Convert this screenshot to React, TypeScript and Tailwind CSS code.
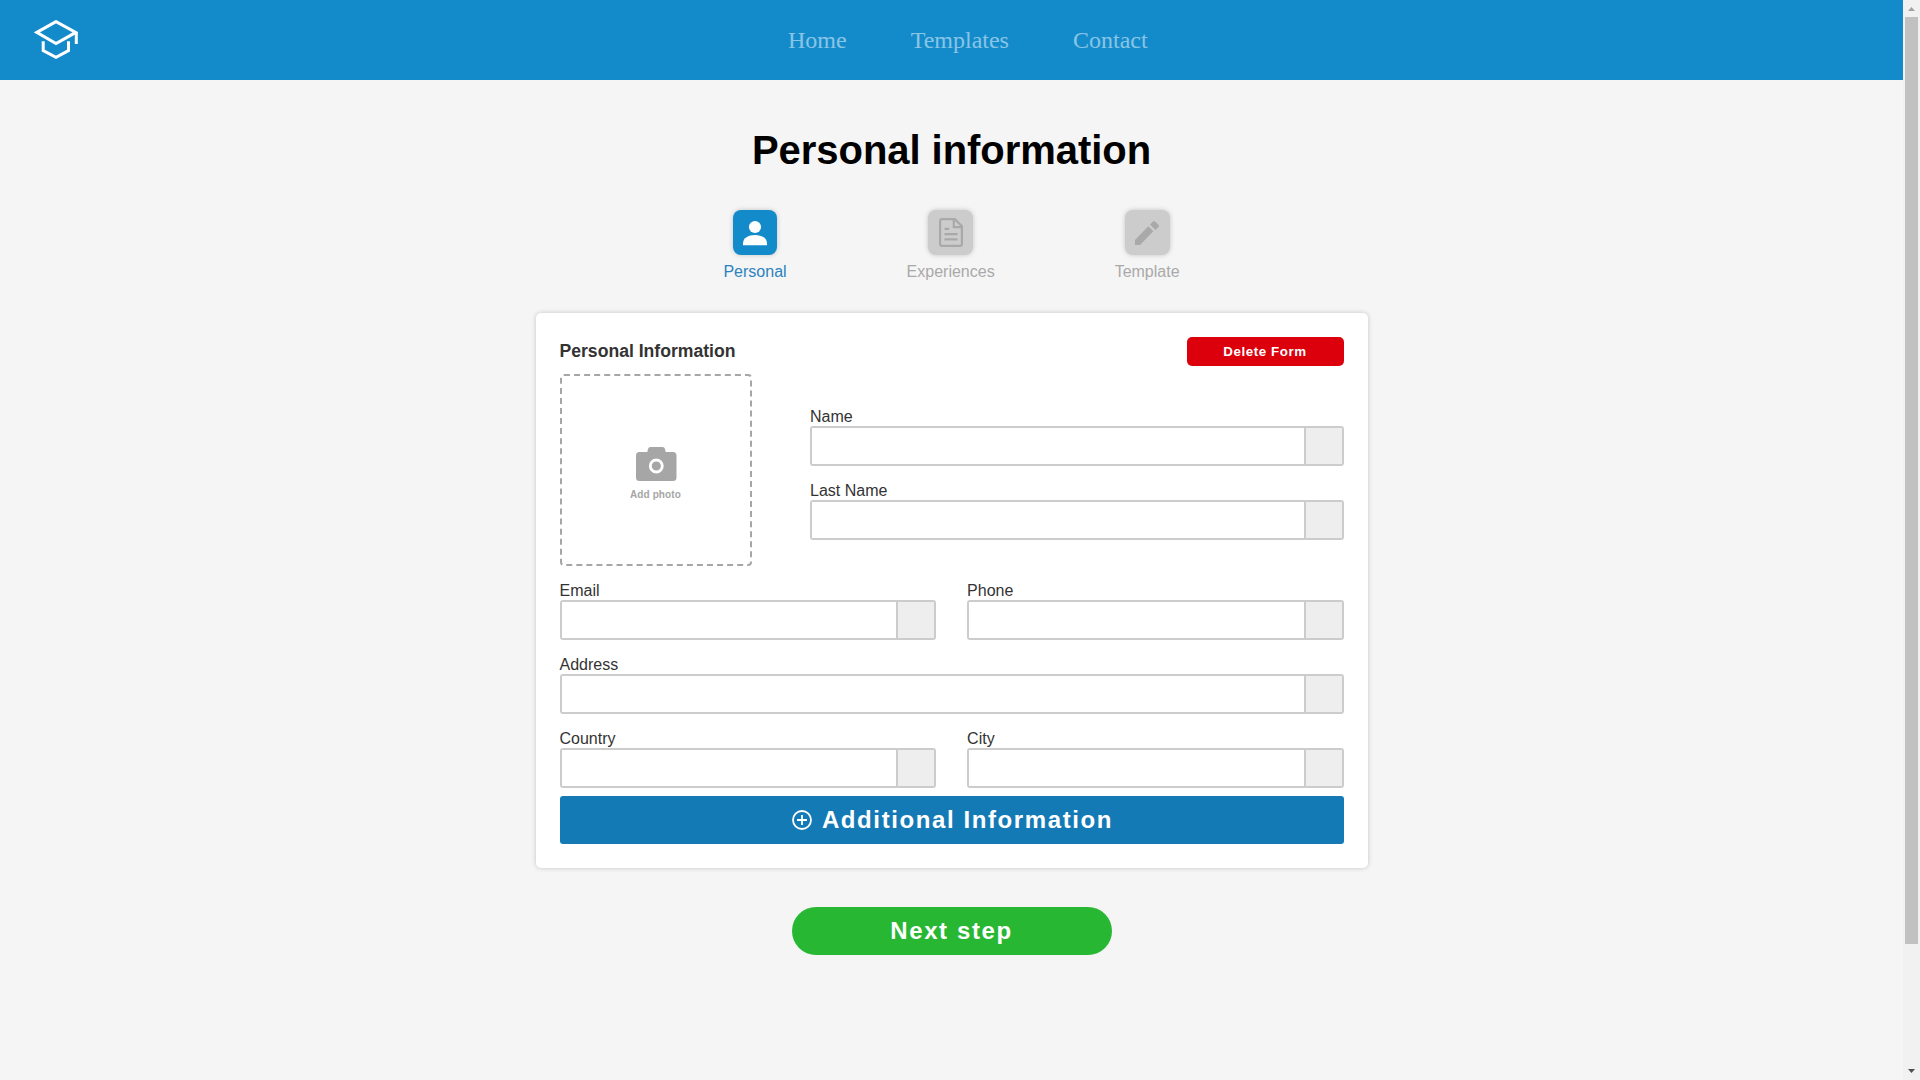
import React from "react";

function Logo() {
  return (
    <svg width="44" height="40" viewBox="0 0 44 40" fill="none" stroke="#ffffff" strokeWidth="3">
      <path d="M2.8 12.4 22 1.6 41.8 12.4 22 23.6Z" />
      <path d="M42.3 12.4V24" />
      <path d="M9.2 21.3V30.5L22 37.4 34.5 30.5V21.3" />
    </svg>
  );
}

function PersonIcon() {
  return (
    <svg width="24" height="26" viewBox="0 0 24 26" fill="#ffffff">
      <circle cx="12" cy="7" r="6.1" />
      <path d="M0 23.4C0 17.8 5.4 14.9 12 14.9S24 17.8 24 23.4V25.2H0Z" />
    </svg>
  );
}

function DocumentIcon() {
  return (
    <svg width="24" height="29" viewBox="0 0 24 29" fill="none" stroke="#a9a9a9" strokeWidth="2.2">
      <path d="M3 1.1H15.8L22.9 8.2V26Q22.9 27.9 21 27.9H3Q1.1 27.9 1.1 26V3Q1.1 1.1 3 1.1Z" />
      <path d="M14.8 1.1V9.2H22.9" />
      <path d="M5.5 10.8H10.2M5.5 16.2H18.5M5.5 21.4H18.5" />
    </svg>
  );
}

function PencilIcon() {
  return (
    <svg width="26" height="26" viewBox="0 0 26 26" fill="#a9a9a9">
      <path d="M14.3 6.2 19.4 11.3 6 25H1V20Z" />
      <path d="M16 4.5 19 1.4Q20 .6 21 1.4L24.6 5Q25.4 6 24.6 7L21.4 10Z" />
    </svg>
  );
}

function CameraIcon() {
  return (
    <svg className="relative left-[1px]" width="41" height="34" viewBox="0 0 41 34">
      <path
        fill="#a6a6a6"
        d="M3.5 5H11.3L12 2Q12.5 0 14.5 0H26.5Q28.5 0 29 2L29.7 5H37Q40.5 5 40.5 8.5V30.5Q40.5 34 37 34H3.5Q0 34 0 30.5V8.5Q0 5 3.5 5Z"
      />
      <circle cx="20.3" cy="19" r="6" fill="#a6a6a6" stroke="#ffffff" strokeWidth="2.8" />
    </svg>
  );
}

function PlusCircleIcon() {
  return (
    <svg width="20" height="20" viewBox="0 0 20 20" fill="none" stroke="#ffffff" strokeWidth="1.8">
      <circle cx="10" cy="10" r="9" />
      <path d="M10 5V15M5 10H15" />
    </svg>
  );
}

function Step({
  label,
  active,
  children,
}: {
  label: string;
  active?: boolean;
  children: React.ReactNode;
}) {
  return (
    <div className={`flex flex-col items-center ${active ? "text-[#2b83bf]" : "text-[#a9a9a9]"}`}>
      <div
        className={`flex h-[45px] items-center justify-center rounded-lg shadow-[0_0_5px_rgba(0,0,0,0.2)] ${
          active ? "w-11 bg-[#138bcb]" : "w-[45px] bg-[#cccccc]"
        }`}
      >
        {children}
      </div>
      <span className="mt-2 text-base leading-[18px]">{label}</span>
    </div>
  );
}

function Field({ label }: { label: string }) {
  return (
    <label className="flex flex-1 flex-col text-base leading-[18px] text-[#333333]">
      {label}
      <span className="flex h-10 overflow-hidden rounded-[3px] border-2 border-[#cccccc]">
        <input className="min-w-0 flex-1 bg-white px-2 outline-none" />
        <span className="w-[38px] border-l-2 border-[#cccccc] bg-[#eeeeee]" />
      </span>
    </label>
  );
}

function Scrollbar() {
  return (
    <div className="flex w-[17px] flex-col items-center bg-[#f1f1f1]">
      <svg className="h-[17px] w-[17px] shrink-0" viewBox="0 0 17 17" fill="#a3a3a3">
        <path d="M5 11 8.5 7 12 11Z" />
      </svg>
      <div className="h-[927px] w-[13px] bg-[#c1c1c1]" />
      <svg className="mt-auto h-[17px] w-[17px] shrink-0" viewBox="0 0 17 17" fill="#505050">
        <path d="M5 6 8.5 10 12 6Z" />
      </svg>
    </div>
  );
}

export default function App() {
  return (
    <div className="flex h-[1080px] w-[1920px] overflow-hidden bg-[#f5f5f5] font-['Liberation_Sans',Arial,sans-serif]">
      <div className="flex w-[1903px] flex-col">
        <header className="flex h-20 items-center bg-[#138bcb] pl-[34px]">
          <Logo />
          <nav className="ml-[710px] flex gap-16 font-['Liberation_Serif','Times_New_Roman',serif] text-2xl text-white/50">
            <a>Home</a>
            <a>Templates</a>
            <a>Contact</a>
          </nav>
        </header>

        <main className="flex flex-col items-center">
          <h1 className="mt-[47px] text-[40px] leading-[46px] font-bold tracking-[-0.05px] text-black">
            Personal information
          </h1>

          <div className="mt-[37px] flex gap-[120px]">
            <Step label="Personal" active>
              <PersonIcon />
            </Step>
            <Step label="Experiences">
              <DocumentIcon />
            </Step>
            <Step label="Template">
              <PencilIcon />
            </Step>
          </div>

          <section className="mt-8 flex w-[832px] flex-col rounded-[5px] bg-white p-6 shadow-[0_0_5px_rgba(0,0,0,0.2)]">
            <div className="flex h-[37px] items-start justify-between">
              <h2 className="mt-1 text-[17.6px] leading-5 font-bold text-[#333333]">Personal Information</h2>
              <button className="h-[29px] w-[157px] rounded-[5px] bg-[#db000b] pt-px text-[13.33px] font-bold tracking-[0.6px] text-white">
                Delete Form
              </button>
            </div>
            <div className="flex gap-[58.5px]">
              <div className="flex h-48 w-48 flex-col items-center rounded-[4px] border-2 border-dashed border-[#a6a6a6] pt-[71px]">
                <CameraIcon />
                <span className="mt-2 text-[10px] leading-3 font-bold tracking-[0.1px] text-[#a6a6a6]">Add photo</span>
              </div>
              <div className="flex flex-1 flex-col gap-4 pt-[34px]">
                <div className="flex">
                  <Field label="Name" />
                </div>
                <div className="flex">
                  <Field label="Last Name" />
                </div>
              </div>
            </div>
            <div className="mt-4 flex flex-col gap-4">
              <div className="flex gap-[31.2px]">
                <Field label="Email" />
                <Field label="Phone" />
              </div>
              <div className="flex">
                <Field label="Address" />
              </div>
              <div className="flex gap-[31.2px]">
                <Field label="Country" />
                <Field label="City" />
              </div>
            </div>
            <button className="mt-2 flex h-12 items-center justify-center gap-[10px] rounded-[3px] bg-[#147ab6] pl-[2px] text-2xl font-bold tracking-[1.6px] text-white">
              <PlusCircleIcon />
              Additional Information
            </button>
          </section>

          <button className="mt-[39px] h-12 w-80 rounded-full bg-[#27b733] text-2xl font-bold tracking-[1.6px] text-white">
            Next step
          </button>
        </main>
      </div>
      <Scrollbar />
    </div>
  );
}
